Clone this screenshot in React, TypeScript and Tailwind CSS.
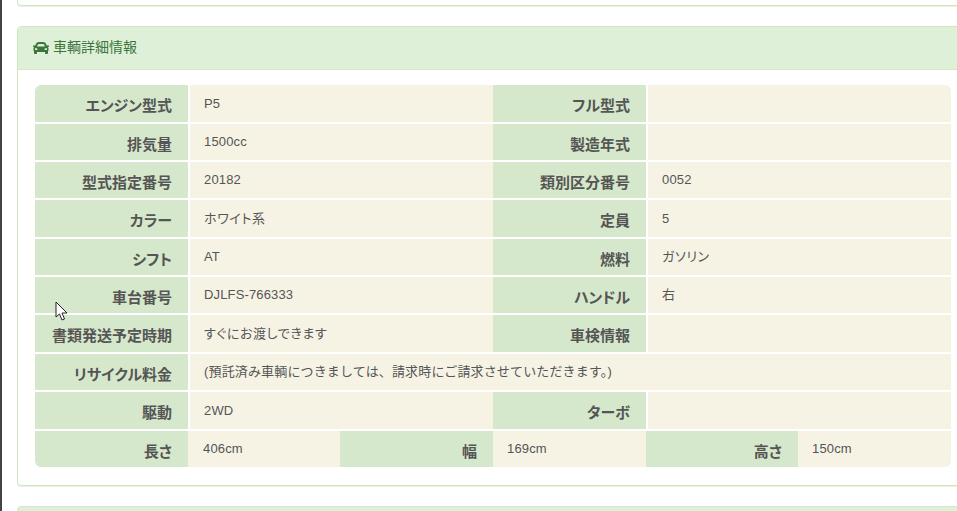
import { FaCar } from 'react-icons/fa';

const rows: { h: string; cells: string[] }[] = [
  { h: 'h-[37px]', cells: ['エンジン型式', 'P5', 'フル型式', ''] },
  { h: 'h-[36px]', cells: ['排気量', '1500cc', '製造年式', ''] },
  { h: 'h-[36px]', cells: ['型式指定番号', '20182', '類別区分番号', '0052'] },
  { h: 'h-[37px]', cells: ['カラー', 'ホワイト系', '定員', '5'] },
  { h: 'h-[36px]', cells: ['シフト', 'AT', '燃料', 'ガソリン'] },
  { h: 'h-[36px]', cells: ['車台番号', 'DJLFS-766333', 'ハンドル', '右'] },
  { h: 'h-[37px]', cells: ['書類発送予定時期', 'すぐにお渡しできます', '車検情報', ''] },
];

const Label = ({ text, className }: { text: string; className: string }) => (
  <div className={`flex items-center justify-end bg-[#d6e8cb] pr-4 pt-[6px] text-[15px] font-bold text-[#555] [font-feature-settings:'palt'] ${className}`}>
    {text}
  </div>
);

const Value = ({ text, className }: { text: string; className: string }) => {
  // Japanese values sit a bit wider than the latin ones
  const spacing = /[^\x00-\x7f]/.test(text) ? 'tracking-[0.6px]' : 'tracking-[0.15px]';
  return (
    <div className={`flex items-center bg-[#f6f3e5] text-[13px] text-[#555] [font-feature-settings:'palt'] ${spacing} ${className}`}>
      {text}
    </div>
  );
};

export default function App() {
  return (
    <div
      className="relative h-[511px] w-[957px] overflow-hidden border-l-2 border-[#444] bg-white"
      style={{ fontFamily: '"Liberation Sans", "Noto Sans CJK JP", sans-serif' }}
    >
      {/* previous panel, only its bottom edge shows */}
      <div className="ml-[15px] mr-[-20px] mt-[-10px] h-[16px] rounded-b border border-[#cfe6bf] bg-white shadow-[0_1px_0_#e8f2e1]" />

      {/* Vehicle details panel */}
      <div className="ml-[15px] mr-[-20px] mt-[20px] h-[460px] rounded border border-[#cfe6bf] bg-white shadow-[0_1px_0_#e8f2e1]">
        <div className="flex h-[43px] items-center gap-[4px] border-b border-[#d6e9c6] bg-[#dff0d8] pb-[1px] pl-[15px] text-[14px] text-[#3c763d]">
          <FaCar className="h-[16px] w-[16px]" />
          <span>車輌詳細情報</span>
        </div>

        <div className="ml-[17px] mt-[15px] flex w-[916px] flex-col gap-[2px] overflow-hidden rounded-md">
          {rows.map((row) => (
            <div key={row.cells[0]} className={`flex ${row.h}`}>
              <Label text={row.cells[0]} className="w-[155px] border-r-2 border-white" />
              <Value text={row.cells[1]} className="w-[303px] pl-[14px]" />
              <Label text={row.cells[2]} className="w-[155px] border-r-2 border-white" />
              <Value text={row.cells[3]} className="w-[303px] pl-[14px]" />
            </div>
          ))}

          <div className="flex h-[36px]">
            <Label text="リサイクル料金" className="w-[155px] border-r-2 border-white" />
            <div className="flex flex-1 items-center bg-[#f6f3e5] pl-[14px] text-[13px] tracking-[0.15px] text-[#555]">
              (預託済み車輌につきましては、請求時にご請求させていただきます。)
            </div>
          </div>

          <div className="flex h-[37px]">
            <Label text="駆動" className="w-[155px] border-r-2 border-white" />
            <Value text="2WD" className="w-[303px] pl-[14px]" />
            <Label text="ターボ" className="w-[155px] border-r-2 border-white" />
            <Value text="" className="w-[303px]" />
          </div>

          <div className="flex h-[36px]">
            <Label text="長さ" className="w-[153px]" />
            <Value text="406cm" className="w-[152px] pl-[15px]" />
            <Label text="幅" className="w-[153px]" />
            <Value text="169cm" className="w-[153px] pl-[14px]" />
            <Label text="高さ" className="w-[152px]" />
            <Value text="150cm" className="w-[153px] pl-[14px]" />
          </div>
        </div>
      </div>

      {/* next panel, only its top edge shows */}
      <div className="ml-[15px] mr-[-20px] mt-[20px] h-[30px] rounded border border-[#d6e9c6] bg-[#dff0d8]" />

      {/* mouse cursor */}
      <svg className="absolute left-[53px] top-[301px]" width="14" height="21" viewBox="0 0 14 21">
        <path d="M1 1 L1 16 L4.5 13 L7 19 L9.5 18 L7 12 L12 12 Z" fill="#fff" stroke="#222" strokeWidth="1" />
      </svg>
    </div>
  );
}
